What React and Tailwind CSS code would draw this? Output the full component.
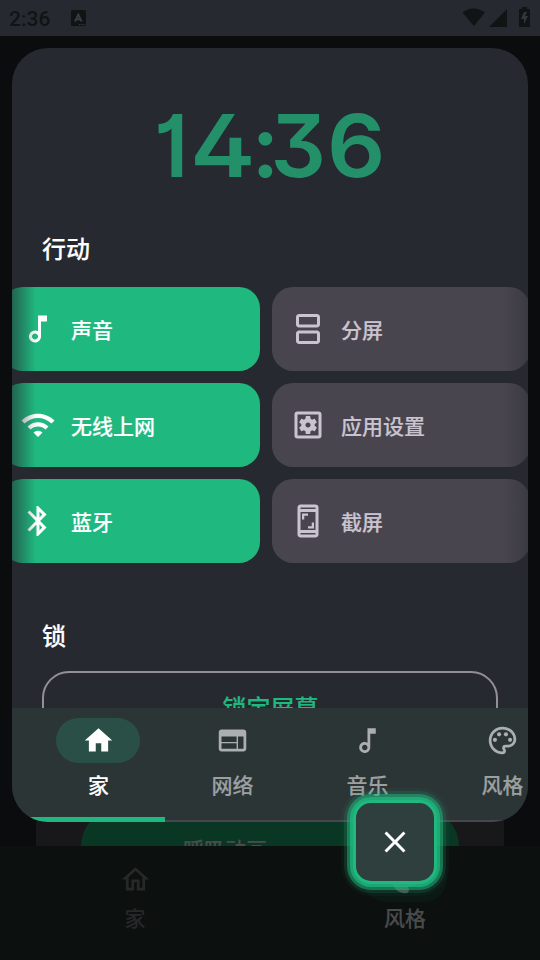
import {
    MdBluetooth,
    MdClose,
    MdHome,
    MdOutlineHome,
    MdOutlineMusicNote,
    MdOutlinePalette,
    MdOutlineScreenshot,
    MdOutlineSettingsApplications,
    MdOutlineSplitscreen,
    MdPalette,
    MdWeb,
    MdWifi,
} from "react-icons/md";
import cn from "clsx";

const toggles = [
    { label: "声音", icon: MdOutlineMusicNote, active: true },
    { label: "分屏", icon: MdOutlineSplitscreen, active: false },
    { label: "无线上网", icon: MdWifi, active: true },
    { label: "应用设置", icon: MdOutlineSettingsApplications, active: false },
    { label: "蓝牙", icon: MdBluetooth, active: true },
    { label: "截屏", icon: MdOutlineScreenshot, active: false },
];

const tabs = [
    { label: "家", icon: MdHome },
    { label: "网络", icon: MdWeb },
    { label: "音乐", icon: MdOutlineMusicNote },
    { label: "风格", icon: MdOutlinePalette },
];

const StatusBar = () => (
    <div className="flex h-9 shrink-0 items-center bg-[#262930] text-[#101414]">
        <span className="ml-[9px] w-[62px] pt-px font-[Roboto] text-[21px] font-medium leading-9 [-webkit-text-stroke:0]">
            2:36
        </span>
        <svg width="15" height="16" viewBox="0 0 15 16">
            <rect width="15" height="16" rx="1.5" fill="currentColor" />
            <path
                d="M4 11.5L7.3 4.5L10.6 11.5M5.3 9.3H9.3"
                fill="none"
                stroke="#3a3e44"
                strokeWidth="1.8"
            />
            <path d="M8 14.5h1.3M10.3 14.5h1.3M12.6 14.5h1.2" stroke="#3a3e44" />
        </svg>
        <svg
            className="mb-[3px] ml-auto mr-[9px]"
            width="69"
            height="22"
            viewBox="0 0 69 22"
            fill="currentColor"
        >
            <path d="M0.5 6.5Q11.5 -1.5 23 6.5L12 20Z" />
            <path d="M45 3V21H27Z" />
            <path d="M60 1h5v2h3v18H57V3h3z" />
            <path d="M62 6l-3 7h3v5l4-8h-3l2-4z" fill="#33373d" />
        </svg>
    </div>
);

const Clock = () => (
    <div className="flex h-[90px] justify-center font-[Inter] text-[87px] font-semibold leading-[90px] text-[#239069] [-webkit-text-stroke:0] [font-feature-settings:'cv01','cv02','cv09']">
        <span className="w-[36px] origin-left scale-x-95">1</span>
        <span className="w-[62px] origin-left scale-x-[1.13]">4</span>
        <span className="w-[19px]">:</span>
        <span className="w-[56px]">3</span>
        <span className="w-[60px] origin-left scale-x-[1.05]">6</span>
    </div>
);

const ToggleCard = ({ label, icon: IconComponent, active }) => (
    <div
        className={cn(
            "flex h-[84px] items-center gap-[15px] rounded-[21px] pl-[18px] text-[21px]",
            active ? "bg-[#1fb980] text-white" : "bg-[#49454f] text-[#cac4d0]"
        )}
    >
        <IconComponent size={36} />
        <span className="pt-px">{label}</span>
    </div>
);

const TabBar = () => (
    <div className="relative flex h-[114px] shrink-0 bg-[#2b3536] pl-[18px] pt-2.5">
        <div className="absolute inset-x-0 bottom-0 h-0.5 bg-[#49454f]" />
        {tabs.map(({ label, icon: IconComponent }, index) => (
            <div
                key={label}
                className={cn(
                    "relative flex w-[135px] shrink-0 flex-col items-center text-[21px]",
                    index === 0 ? "text-white" : "text-[#9da0a1]"
                )}
            >
                <div
                    className={cn(
                        "flex h-[45px] w-[84px] items-center justify-center rounded-full",
                        index === 0 ? "bg-[#2a4f46] pl-px" : "text-[#acafb0]"
                    )}
                >
                    <IconComponent size={33} />
                </div>
                <span
                    className={cn(
                        "mt-1.5 leading-[30px]",
                        index === 0 && "pl-0.5"
                    )}
                >
                    {label}
                </span>
                {index === 0 && (
                    <div className="absolute inset-x-0 bottom-0 h-[5px] bg-[#1fb980]" />
                )}
            </div>
        ))}
    </div>
);

const Panel = () => (
    <div className="absolute left-3 top-12 flex h-[774px] w-[516px] flex-col overflow-hidden rounded-[36px] bg-[#262930]">
        <div className="min-h-0 flex-1 overflow-hidden pt-[53px]">
            <Clock />
            <h2 className="mt-[39px] pl-[30px] text-[24px] leading-9 text-white">
                行动
            </h2>
            <div className="relative mt-[21px]">
                <div className="-mx-2.5 grid w-[528px] grid-cols-2 gap-3">
                    {toggles.map((item) => (
                        <ToggleCard key={item.label} {...item} />
                    ))}
                </div>
                {/* faded scroll edges */}
                <div className="absolute inset-y-0 left-0 w-6 bg-linear-to-r from-[#262930]/60 to-transparent" />
                <div className="absolute inset-y-0 right-0 w-6 bg-linear-to-l from-[#262930]/40 to-transparent" />
            </div>
            <h2 className="mt-[54px] pl-[30px] text-[24px] leading-9 text-white">
                锁
            </h2>
            <div className="mx-[30px] mt-[18px] h-[78px] rounded-[27px] border-2 border-[#938f99] pl-px text-center text-[24px] leading-[67px] text-[#1fb980]">
                锁定屏幕
            </div>
        </div>
        <TabBar />
    </div>
);

const Backdrop = () => (
    <>
        <StatusBar />
        <div className="flex flex-1 items-end overflow-hidden px-9">
            <div className="flex-1 bg-[#181719] px-[45px] pt-5">
                <div className="h-[38px] rounded-t-[38px] bg-[#0a3624] pr-[90px] pt-[25px] text-center text-[21px] leading-[30px] text-[#4b4d4d]">
                    呼吸动画
                </div>
            </div>
        </div>
        <div className="z-0 grid h-[114px] shrink-0 grid-cols-2 bg-[#0c100f] pt-[11px] text-[21px]">
            <div className="flex flex-col items-center text-[#262829]">
                <div className="flex h-[45px] items-center">
                    <MdOutlineHome size={33} />
                </div>
                <span className="leading-[30px]">家</span>
            </div>
            <div className="flex flex-col items-center text-[#4a4b4b]">
                <div className="flex h-[45px] w-[84px] items-center justify-center rounded-full bg-[#0b1814]">
                    <MdPalette size={33} />
                </div>
                <span className="leading-[30px]">风格</span>
            </div>
        </div>
    </>
);

const App = () => (
    <div
        lang="zh-CN"
        className="relative flex h-[960px] w-[540px] flex-col overflow-hidden bg-[#0b0c0e] font-['Noto_Sans_CJK_SC',sans-serif] font-medium [-webkit-text-stroke:0.15px]"
    >
        <Backdrop />
        <Panel />
        <button className="absolute left-[356px] top-[803px] flex size-[78px] items-center justify-center rounded-[15px] bg-[#2e3f3e] text-white shadow-[0_0_0_3px_#1fb980,0_0_0_6px_#1fb980b8,0_0_0_9px_#1fb98080,0_0_0_12px_#1fb98026,0_0_0_15px_#1fb9800d]">
            <MdClose size={36} />
        </button>
    </div>
);

export default App;
